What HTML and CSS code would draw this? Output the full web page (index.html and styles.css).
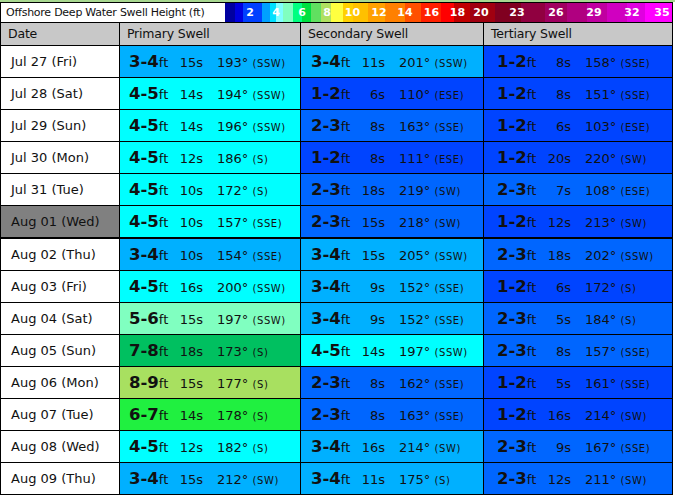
FILE: index.html
```html
<!DOCTYPE html>
<html>
<head>
  <title>Offshore Deep Water Swell Height</title>
  <meta charset="UTF-8" />
  <link rel="stylesheet" href="styles.css">
</head>
<body>
  <div class="topline"></div>

  <div class="grid">
    <!-- legend -->
    <div class="legend">
      <span class="legend-title">Offshore Deep Water Swell Height (ft)</span>
      <div class="scale">
        <span class="s12"></span>
        <span class="s26">2</span>
        <span class="s26">4</span>
        <span class="s26">6</span>
        <span class="s24">8</span>
        <span class="s27">10</span>
        <span class="s26">12</span>
        <span class="s26">14</span>
        <span class="s27">16</span>
        <span class="s25">18</span>
        <span class="s22">20</span>
        <span class="s6"></span>
        <span class="s38">23</span>
        <span class="s40">26</span>
        <span class="s36">29</span>
        <span class="s40">32</span>
        <span class="s20">35</span>
      </div>
    </div>

    <!-- header -->
    <div class="head">Date</div>
    <div class="head">Primary Swell</div>
    <div class="head">Secondary Swell</div>
    <div class="head">Tertiary Swell</div>

    <div class="row">
      <div class="date">Jul 27 (Fri)</div>
      <div class="sw h34"><div class="sw-in"><span class="ht"><b>3-4</b>ft</span><span class="per">15s</span><span class="dir">193° <small>(SSW)</small></span></div></div>
      <div class="sw h34"><div class="sw-in"><span class="ht"><b>3-4</b>ft</span><span class="per">11s</span><span class="dir">201° <small>(SSW)</small></span></div></div>
      <div class="sw h12"><div class="sw-in"><span class="ht"><b>1-2</b>ft</span><span class="per">8s</span><span class="dir">158° <small>(SSE)</small></span></div></div>
    </div>
    <div class="row">
      <div class="date">Jul 28 (Sat)</div>
      <div class="sw h45"><div class="sw-in"><span class="ht"><b>4-5</b>ft</span><span class="per">14s</span><span class="dir">194° <small>(SSW)</small></span></div></div>
      <div class="sw h12"><div class="sw-in"><span class="ht"><b>1-2</b>ft</span><span class="per">6s</span><span class="dir">110° <small>(ESE)</small></span></div></div>
      <div class="sw h12"><div class="sw-in"><span class="ht"><b>1-2</b>ft</span><span class="per">8s</span><span class="dir">151° <small>(SSE)</small></span></div></div>
    </div>
    <div class="row">
      <div class="date">Jul 29 (Sun)</div>
      <div class="sw h45"><div class="sw-in"><span class="ht"><b>4-5</b>ft</span><span class="per">14s</span><span class="dir">196° <small>(SSW)</small></span></div></div>
      <div class="sw h23"><div class="sw-in"><span class="ht"><b>2-3</b>ft</span><span class="per">8s</span><span class="dir">163° <small>(SSE)</small></span></div></div>
      <div class="sw h12"><div class="sw-in"><span class="ht"><b>1-2</b>ft</span><span class="per">6s</span><span class="dir">103° <small>(ESE)</small></span></div></div>
    </div>
    <div class="row">
      <div class="date">Jul 30 (Mon)</div>
      <div class="sw h45"><div class="sw-in"><span class="ht"><b>4-5</b>ft</span><span class="per">12s</span><span class="dir">186° <small>(S)</small></span></div></div>
      <div class="sw h12"><div class="sw-in"><span class="ht"><b>1-2</b>ft</span><span class="per">8s</span><span class="dir">111° <small>(ESE)</small></span></div></div>
      <div class="sw h12"><div class="sw-in"><span class="ht"><b>1-2</b>ft</span><span class="per">20s</span><span class="dir">220° <small>(SW)</small></span></div></div>
    </div>
    <div class="row">
      <div class="date">Jul 31 (Tue)</div>
      <div class="sw h45"><div class="sw-in"><span class="ht"><b>4-5</b>ft</span><span class="per">10s</span><span class="dir">172° <small>(S)</small></span></div></div>
      <div class="sw h23"><div class="sw-in"><span class="ht"><b>2-3</b>ft</span><span class="per">18s</span><span class="dir">219° <small>(SW)</small></span></div></div>
      <div class="sw h23"><div class="sw-in"><span class="ht"><b>2-3</b>ft</span><span class="per">7s</span><span class="dir">108° <small>(ESE)</small></span></div></div>
    </div>
    <div class="row">
      <div class="date today">Aug 01 (Wed)</div>
      <div class="sw h45"><div class="sw-in"><span class="ht"><b>4-5</b>ft</span><span class="per">10s</span><span class="dir">157° <small>(SSE)</small></span></div></div>
      <div class="sw h23"><div class="sw-in"><span class="ht"><b>2-3</b>ft</span><span class="per">15s</span><span class="dir">218° <small>(SW)</small></span></div></div>
      <div class="sw h12"><div class="sw-in"><span class="ht"><b>1-2</b>ft</span><span class="per">12s</span><span class="dir">213° <small>(SW)</small></span></div></div>
    </div>
    <div class="row after-today">
      <div class="date">Aug 02 (Thu)</div>
      <div class="sw h34"><div class="sw-in"><span class="ht"><b>3-4</b>ft</span><span class="per">10s</span><span class="dir">154° <small>(SSE)</small></span></div></div>
      <div class="sw h34"><div class="sw-in"><span class="ht"><b>3-4</b>ft</span><span class="per">15s</span><span class="dir">205° <small>(SSW)</small></span></div></div>
      <div class="sw h23"><div class="sw-in"><span class="ht"><b>2-3</b>ft</span><span class="per">18s</span><span class="dir">202° <small>(SSW)</small></span></div></div>
    </div>
    <div class="row">
      <div class="date">Aug 03 (Fri)</div>
      <div class="sw h45"><div class="sw-in"><span class="ht"><b>4-5</b>ft</span><span class="per">16s</span><span class="dir">200° <small>(SSW)</small></span></div></div>
      <div class="sw h34"><div class="sw-in"><span class="ht"><b>3-4</b>ft</span><span class="per">9s</span><span class="dir">152° <small>(SSE)</small></span></div></div>
      <div class="sw h12"><div class="sw-in"><span class="ht"><b>1-2</b>ft</span><span class="per">6s</span><span class="dir">172° <small>(S)</small></span></div></div>
    </div>
    <div class="row">
      <div class="date">Aug 04 (Sat)</div>
      <div class="sw h56"><div class="sw-in"><span class="ht"><b>5-6</b>ft</span><span class="per">15s</span><span class="dir">197° <small>(SSW)</small></span></div></div>
      <div class="sw h34"><div class="sw-in"><span class="ht"><b>3-4</b>ft</span><span class="per">9s</span><span class="dir">152° <small>(SSE)</small></span></div></div>
      <div class="sw h23"><div class="sw-in"><span class="ht"><b>2-3</b>ft</span><span class="per">5s</span><span class="dir">184° <small>(S)</small></span></div></div>
    </div>
    <div class="row">
      <div class="date">Aug 05 (Sun)</div>
      <div class="sw h78"><div class="sw-in"><span class="ht"><b>7-8</b>ft</span><span class="per">18s</span><span class="dir">173° <small>(S)</small></span></div></div>
      <div class="sw h45"><div class="sw-in"><span class="ht"><b>4-5</b>ft</span><span class="per">14s</span><span class="dir">197° <small>(SSW)</small></span></div></div>
      <div class="sw h23"><div class="sw-in"><span class="ht"><b>2-3</b>ft</span><span class="per">8s</span><span class="dir">157° <small>(SSE)</small></span></div></div>
    </div>
    <div class="row">
      <div class="date">Aug 06 (Mon)</div>
      <div class="sw h89"><div class="sw-in"><span class="ht"><b>8-9</b>ft</span><span class="per">15s</span><span class="dir">177° <small>(S)</small></span></div></div>
      <div class="sw h23"><div class="sw-in"><span class="ht"><b>2-3</b>ft</span><span class="per">8s</span><span class="dir">162° <small>(SSE)</small></span></div></div>
      <div class="sw h12"><div class="sw-in"><span class="ht"><b>1-2</b>ft</span><span class="per">5s</span><span class="dir">161° <small>(SSE)</small></span></div></div>
    </div>
    <div class="row">
      <div class="date">Aug 07 (Tue)</div>
      <div class="sw h67"><div class="sw-in"><span class="ht"><b>6-7</b>ft</span><span class="per">14s</span><span class="dir">178° <small>(S)</small></span></div></div>
      <div class="sw h23"><div class="sw-in"><span class="ht"><b>2-3</b>ft</span><span class="per">8s</span><span class="dir">163° <small>(SSE)</small></span></div></div>
      <div class="sw h12"><div class="sw-in"><span class="ht"><b>1-2</b>ft</span><span class="per">16s</span><span class="dir">214° <small>(SW)</small></span></div></div>
    </div>
    <div class="row">
      <div class="date">Aug 08 (Wed)</div>
      <div class="sw h45"><div class="sw-in"><span class="ht"><b>4-5</b>ft</span><span class="per">12s</span><span class="dir">182° <small>(S)</small></span></div></div>
      <div class="sw h34"><div class="sw-in"><span class="ht"><b>3-4</b>ft</span><span class="per">16s</span><span class="dir">214° <small>(SW)</small></span></div></div>
      <div class="sw h23"><div class="sw-in"><span class="ht"><b>2-3</b>ft</span><span class="per">9s</span><span class="dir">167° <small>(SSE)</small></span></div></div>
    </div>
    <div class="row">
      <div class="date">Aug 09 (Thu)</div>
      <div class="sw h34"><div class="sw-in"><span class="ht"><b>3-4</b>ft</span><span class="per">15s</span><span class="dir">212° <small>(SW)</small></span></div></div>
      <div class="sw h34"><div class="sw-in"><span class="ht"><b>3-4</b>ft</span><span class="per">11s</span><span class="dir">175° <small>(S)</small></span></div></div>
      <div class="sw h23"><div class="sw-in"><span class="ht"><b>2-3</b>ft</span><span class="per">12s</span><span class="dir">211° <small>(SW)</small></span></div></div>
    </div>
  </div>
</body>
</html>
```

FILE: styles.css
```css
body {
  margin: 0;
  background: #fff;
  font-family: "DejaVu Sans", Verdana, sans-serif;
  color: #111;
}
.topline { height: 2px; width: 675px; background: #a8d890; }

.grid {
  display: grid;
  grid-template-columns: 118px 180px 182px 188px;
  grid-template-rows: 19px 22px repeat(6, 31px) 32px repeat(7, 31px);
  gap: 1px;
  width: 672px;
  background: #000;
  border: 1px solid #000;
  border-right: 0;
}
.row { display: contents; }

/* legend strip */
.legend {
  grid-column: 1 / -1;
  display: flex;
  background: #fff;
}
.legend-title {
  width: 219px;
  padding-left: 5px;
  font-size: 11px;
  letter-spacing: -0.25px;
  line-height: 19px;
  white-space: nowrap;
  overflow: hidden;
}
.scale {
  flex: 1;
  display: flex;
  color: #fff;
  font-weight: bold;
  font-size: 11px;
  line-height: 19px;
  background: linear-gradient(to right,
    #0000a0 0 10px, #0000e0 10px 18px, #0040ff 18px 37px, #00a0ff 37px 45px,
    #00e0ff 45px 51px, #80ffff 51px 58px, #80ffc0 58px 68px, #00ff80 68px 77px,
    #00e040 77px 86px, #60e060 86px 96px, #b0e060 96px 106px, #ffff40 106px 118px,
    #ffd000 118px 128px, #ffc000 128px 143px, #ffa000 143px 160px, #ff8000 160px 180px,
    #ff5000 180px 196px, #ff2000 196px 216px, #ff0000 216px 229px, #c00000 229px 245px,
    #a00010 245px 270px, #800020 270px 296px, #900040 296px 320px, #a00060 320px 342px,
    #b00080 342px 362px, #c000a0 362px 382px, #d000c0 382px 402px, #e000e0 402px 420px,
    #ff00ff 420px);
}
.scale span { text-align: center; flex: none; }
.s6 { width: 6px; }
.s12 { width: 12px; }
.s20 { width: 20px; }
.s22 { width: 22px; }
.s24 { width: 24px; }
.s25 { width: 25px; }
.s26 { width: 26px; }
.s27 { width: 27px; }
.s36 { width: 36px; }
.s38 { width: 38px; }
.s40 { width: 40px; }

/* header */
.head {
  background: #c8c8c8;
  font-size: 12.5px;
  letter-spacing: -0.2px;
  line-height: 22px;
  padding-left: 7px;
}

/* cells */
.date {
  background: #fff;
  font-size: 13px;
  line-height: 31px;
  padding-left: 10px;
}
.date.today { background: #808080; }
.after-today > div { border-top: 1px solid #000; }

.sw { display: flex; justify-content: center; align-items: center; }
.sw-in { width: 162px; display: flex; align-items: baseline; white-space: nowrap; }
.ht { width: 44px; font-size: 13px; }
.ht b { font-size: 16.5px; }
.per { width: 30px; text-align: right; font-size: 13px; }
.dir { margin-left: 14px; font-size: 13px; }
.dir small { font-size: 10px; letter-spacing: 0.6px; }

.h12 { background: #0044ff; }
.h23 { background: #0066ff; }
.h34 { background: #00b0ff; }
.h45 { background: #00ffff; }
.h56 { background: #80ffc0; }
.h67 { background: #20f040; }
.h78 { background: #00c060; }
.h89 { background: #a8e060; }
```
